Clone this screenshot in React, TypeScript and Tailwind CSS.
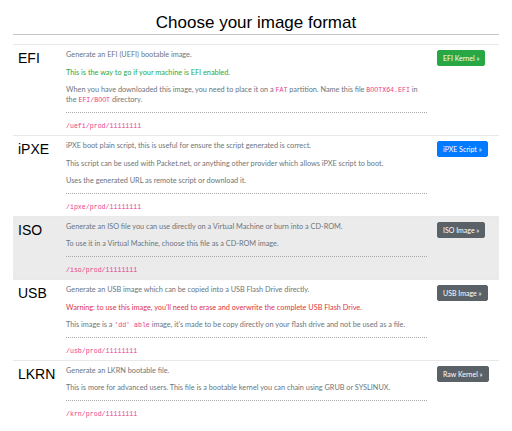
import React from 'react';

type Section = {
    name: string;
    button: string;
    buttonClass: string;
    shaded?: boolean;
    lines: React.ReactNode[];
    path: string;
};

const Code: React.FC<{ children: React.ReactNode }> = ({ children }) => (
    <span className="font-['Liberation_Mono',monospace] text-[6.6px] leading-[6px] text-[#e83e8c]">{children}</span>
);

const sections: Section[] = [
    {
        name: 'EFI',
        button: 'EFI Kernel »',
        buttonClass: 'bg-[#28a745] border-[#28a745]',
        lines: [
            'Generate an EFI (UEFI) bootable image.',
            <span className="text-[#28a745]">This is the way to go if your machine is EFI enabled.</span>,
            <>
                When you have downloaded this image, you need to place it on a <Code>FAT</Code> partition. Name this file{' '}
                <Code>BOOTX64.EFI</Code> in the <Code>EFI/BOOT</Code> directory.
            </>,
        ],
        path: '/uefi/prod/11111111',
    },
    {
        name: 'iPXE',
        button: 'iPXE Script »',
        buttonClass: 'bg-[#007bff] border-[#007bff]',
        lines: [
            'iPXE boot plain script, this is useful for ensure the script generated is correct.',
            'This script can be used with Packet.net, or anything other provider which allows iPXE script to boot.',
            'Uses the generated URL as remote script or download it.',
        ],
        path: '/ipxe/prod/11111111',
    },
    {
        name: 'ISO',
        button: 'ISO Image »',
        buttonClass: 'bg-[#5a6268] border-[#5a6268]',
        shaded: true,
        lines: [
            'Generate an ISO file you can use directly on a Virtual Machine or burn into a CD-ROM.',
            'To use it in a Virtual Machine, choose this file as a CD-ROM image.',
        ],
        path: '/iso/prod/11111111',
    },
    {
        name: 'USB',
        button: 'USB Image »',
        buttonClass: 'bg-[#5a6268] border-[#5a6268]',
        lines: [
            'Generate an USB image which can be copied into a USB Flash Drive directly.',
            <span className="text-[#dc3545]">Warning: to use this image, you'll need to erase and overwrite the complete USB Flash Drive.</span>,
            <>
                This image is a <Code>'dd' able</Code> image, it's made to be copy directly on your flash drive and not be used as a file.
            </>,
        ],
        path: '/usb/prod/11111111',
    },
    {
        name: 'LKRN',
        button: 'Raw Kernel »',
        buttonClass: 'bg-[#5a6268] border-[#5a6268]',
        lines: [
            'Generate an LKRN bootable file.',
            'This is more for advanced users. This file is a bootable kernel you can chain using GRUB or SYSLINUX.',
        ],
        path: '/krn/prod/11111111',
    },
];

const App: React.FC = () => {
    return (
        <main className="w-[512px] h-[431px] bg-white px-[13px] overflow-hidden">
            <header className="pt-[13px] pb-[1px] border-b border-[#c4c4c4] mb-[9px]">
                <h1 className="text-center font-['Liberation_Sans',Arial,sans-serif] text-[17px] leading-[20px] text-black">
                    Choose your image format
                </h1>
            </header>

            {sections.map((s) => (
                <section
                    key={s.name}
                    className={`flex items-start pt-[5px] pb-[4px] border-t border-[#e9e9e9] ${s.shaded ? 'bg-[#ebebeb]' : ''}`}
                >
                    <h2 className="w-[53px] shrink-0 pl-[5px] font-['Liberation_Sans',Arial,sans-serif] text-[14px] leading-[16px] text-black">
                        {s.name}
                    </h2>
                    <div className="w-[361px] shrink-0 font-['Lato',sans-serif] text-[7.3px] leading-[10px] text-[#6c757d]">
                        {s.lines.map((line, j) => (
                            <p key={j} className={s.lines.length === 3 && j < 2 ? 'mb-[7.5px]' : 'mb-[7px]'}>
                                {line}
                            </p>
                        ))}
                        <div className="border-t border-dotted border-[#a8a8a8]" />
                        <p className="mt-[8px] leading-[10px]">
                            <Code>{s.path}</Code>
                        </p>
                    </div>
                    <div className="flex items-start pl-[10px]">
                        <button
                            className={`h-[16px] px-[5px] rounded-[2px] border text-white font-['Lato',sans-serif] text-[7px] leading-[14px] whitespace-nowrap ${s.buttonClass}`}
                        >
                            {s.button}
                        </button>
                    </div>
                </section>
            ))}
        </main>
    );
};

export default App;
